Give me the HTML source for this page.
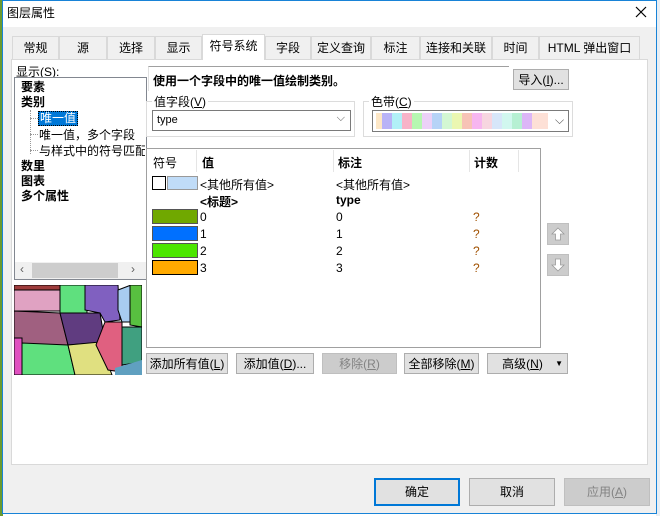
<!DOCTYPE html>
<html><head><meta charset="utf-8"><style>
*{box-sizing:border-box;margin:0;padding:0}
body{width:660px;height:516px;overflow:hidden;background:#fff;font-family:"Liberation Sans","Noto Sans CJK SC",sans-serif;font-size:12px;color:#000;position:relative}
.a{position:absolute}
.btn{position:absolute;background:#e1e1e1;border:1px solid #adadad;text-align:center;line-height:20px;font-size:12px}
.dis{background:#cccccc;border-color:#bfbfbf;color:#838383}
.tab{position:absolute;top:36px;height:23px;border:1px solid #d9d9d9;border-bottom:none;background:#f0f0f0;text-align:center;line-height:22px;font-size:12px}
.grp{position:absolute;border:1px solid #dcdcdc}
.sw{position:absolute;left:152px;width:46px;height:15px;border:1px solid #555}
b{font-weight:bold}
</style></head><body>
<div class="a" style="left:0;top:0;width:3px;height:516px;background:#6a9a30"></div>
<div class="a" style="left:656px;top:0;width:4px;height:516px;background:#e8eef4"></div>
<div class="a" style="left:2px;top:0;width:655px;height:514px;border:1px solid #1883d7;background:#f0f0f0"></div>
<div class="a" style="left:3px;top:1px;width:653px;height:26px;background:#fff"></div>
<div class="a" style="left:7px;top:4px;font-size:12px">图层属性</div>
<svg class="a" style="left:635px;top:6px" width="12" height="12"><path d="M1 1L11 11M11 1L1 11" stroke="#000" stroke-width="1.2"/></svg>

<div class="a" style="left:11px;top:59px;width:637px;height:406px;background:#fff;border:1px solid #d9d9d9"></div>
<div class="tab" style="left:12px;width:47px">常规</div>
<div class="tab" style="left:59px;width:48px">源</div>
<div class="tab" style="left:107px;width:48px">选择</div>
<div class="tab" style="left:155px;width:47px">显示</div>
<div class="tab" style="left:202px;top:34px;height:26px;width:63px;background:#fff;z-index:2">符号系统</div>
<div class="tab" style="left:265px;width:46px">字段</div>
<div class="tab" style="left:311px;width:60px">定义查询</div>
<div class="tab" style="left:371px;width:49px">标注</div>
<div class="tab" style="left:420px;width:72px">连接和关联</div>
<div class="tab" style="left:492px;width:47px">时间</div>
<div class="tab" style="left:539px;width:101px">HTML 弹出窗口</div>

<div class="a" style="left:16px;top:63px">显示(<u>S</u>):</div>
<div class="a" style="left:14px;top:77px;width:133px;height:203px;border:1px solid #828790;background:#fff"></div>
<div class="a" style="left:21px;top:80px;line-height:15px"><b>要素</b><br><b>类别</b></div>
<div class="a" style="left:30px;top:110px;width:1px;height:44px;border-left:1px dotted #999"></div>
<div class="a" style="left:30px;top:118px;width:8px;border-top:1px dotted #999"></div>
<div class="a" style="left:30px;top:134px;width:8px;border-top:1px dotted #999"></div>
<div class="a" style="left:30px;top:150px;width:8px;border-top:1px dotted #999"></div>
<div class="a" style="left:38px;top:111px;width:40px;height:15px;background:#0078d7;color:#fff;border:1px dotted #000;line-height:13px;padding-left:1px">唯一值</div>
<div class="a" style="left:39px;top:127px;line-height:16px;white-space:nowrap;width:106px;overflow:hidden">唯一值，多个字段<br>与样式中的符号匹配</div>
<div class="a" style="left:21px;top:159px;line-height:15px"><b>数里</b><br><b>图表</b><br><b>多个属性</b></div>
<div class="a" style="left:15px;top:262px;width:131px;height:17px;background:#f0f0f0"></div>
<div class="a" style="left:32px;top:263px;width:86px;height:15px;background:#cdcdcd"></div>
<div class="a" style="left:20px;top:262px;color:#606060">&lsaquo;</div>
<div class="a" style="left:131px;top:262px;color:#606060">&rsaquo;</div>

<svg class="a" style="left:14px;top:285px" width="128" height="90" viewBox="14 285 128 90">
<g stroke="#000" stroke-width="1">
<rect x="14" y="285" width="128" height="90" fill="#fff" stroke="none"/>
<polygon points="14,285 70,285 70,290 14,290" fill="#9e3c3c"/>
<polygon points="14,290 70,290 70,311 14,311" fill="#e0a2c2"/>
<polygon points="60,285 87,285 87,313 60,313" fill="#5fe07e"/>
<polygon points="85,285 118,285 120,320 105,322 100,313 85,310" fill="#8060c0"/>
<polygon points="118,290 131,285 132,322 122,322 118,310" fill="#a8ccf0"/>
<polygon points="130,285 142,285 142,327 130,325" fill="#58c040"/>
<polygon points="14,311 60,313 68,345 14,345" fill="#a06080"/>
<polygon points="60,313 100,313 105,342 68,345" fill="#603c80"/>
<polygon points="14,338 22,338 22,375 14,375" fill="#e050c0"/>
<polygon points="22,343 68,345 75,375 22,375" fill="#5fe07e"/>
<polygon points="68,345 100,342 112,375 75,375" fill="#e0e080"/>
<polygon points="105,322 122,322 122,372 108,370 96,345" fill="#e06080"/>
<polygon points="122,327 142,327 142,362 122,365" fill="#40a080"/>
<polygon points="115,368 142,360 142,375 115,375" fill="#60a0c0" stroke="none"/>
</g></svg>

<div class="a" style="left:148px;top:66px;width:361px;height:25px;border-top:1px solid #a0a0a0;border-left:1px solid #e0e0e0;padding:5px 4px;font-weight:bold">使用一个字段中的唯一值绘制类别。</div>
<div class="btn" style="left:513px;top:69px;width:56px;height:21px">导入(<u>I</u>)...</div>

<div class="grp" style="left:146px;top:101px;width:209px;height:36px"></div>
<div class="a" style="left:152px;top:93px;background:#fff;padding:0 2px">值字段(<u>V</u>)</div>
<div class="a" style="left:152px;top:110px;width:199px;height:21px;border:1px solid #7a7a7a;padding:3px 4px;font-size:11px">type<span style="position:absolute;right:5px;top:1px;color:#555">⌵</span></div>
<div class="grp" style="left:363px;top:101px;width:210px;height:36px"></div>
<div class="a" style="left:369px;top:93px;background:#fff;padding:0 2px">色带(<u>C</u>)</div>
<div class="a" style="left:372px;top:110px;width:197px;height:22px;border:1px solid #7a7a7a"></div>
<div class="a" style="left:376px;top:113px;height:16px;display:flex">
<i style="width:6px;background:#fde7c6"></i><i style="width:10px;background:#b9b3f7"></i><i style="width:10px;background:#b1f0f7"></i><i style="width:10px;background:#f7b3c8"></i><i style="width:10px;background:#b6f7b1"></i><i style="width:10px;background:#ecd1f7"></i><i style="width:10px;background:#b6d3f7"></i><i style="width:10px;background:#d3f7d3"></i><i style="width:10px;background:#ebf7b1"></i><i style="width:10px;background:#f7c3b6"></i><i style="width:10px;background:#f7b6f0"></i><i style="width:10px;background:#f7d6e0"></i><i style="width:10px;background:#d7e6f9"></i><i style="width:10px;background:#d1f7ef"></i><i style="width:10px;background:#b6f0d3"></i><i style="width:10px;background:#dcb6f7"></i><i style="width:16px;background:#fde0d6"></i></div>
<div class="a" style="left:555px;top:113px;color:#555">⌵</div>

<div class="a" style="left:146px;top:148px;width:395px;height:200px;border:1px solid #a0a0a0;background:#fff"></div>
<div class="a" style="left:196px;top:150px;width:1px;height:22px;background:#e5e5e5"></div>
<div class="a" style="left:333px;top:150px;width:1px;height:22px;background:#e5e5e5"></div>
<div class="a" style="left:469px;top:150px;width:1px;height:22px;background:#e5e5e5"></div>
<div class="a" style="left:518px;top:150px;width:1px;height:22px;background:#e5e5e5"></div>
<div class="a" style="left:153px;top:154px">符号</div>
<div class="a" style="left:202px;top:154px"><b>值</b></div>
<div class="a" style="left:338px;top:154px"><b>标注</b></div>
<div class="a" style="left:474px;top:154px"><b>计数</b></div>
<div class="a" style="left:152px;top:176px;width:14px;height:14px;border:1px solid #000;background:#fff"></div>
<div class="a" style="left:167px;top:176px;width:31px;height:14px;border:1px solid #999;background:#c0dcf8"></div>
<div class="a" style="left:200px;top:176px">&lt;其他所有值&gt;</div>
<div class="a" style="left:336px;top:176px">&lt;其他所有值&gt;</div>
<div class="a" style="left:200px;top:193px"><b>&lt;标题&gt;</b></div>
<div class="a" style="left:336px;top:193px"><b>type</b></div>
<div class="sw" style="top:209px;background:#70a800"></div>
<div class="sw" style="top:226px;background:#0070ff"></div>
<div class="sw" style="top:243px;background:#4ce600"></div>
<div class="sw" style="top:260px;background:#ffaa00;border-color:#000"></div>
<div class="a" style="left:200px;top:209px;line-height:17px">0<br>1<br>2<br>3</div>
<div class="a" style="left:336px;top:209px;line-height:17px">0<br>1<br>2<br>3</div>
<div class="a" style="left:473px;top:209px;line-height:17px;color:#a05000">?<br>?<br>?<br>?</div>

<div class="a" style="left:547px;top:223px;width:22px;height:22px;background:#cccccc;border:1px solid #bfbfbf"></div>
<svg class="a" style="left:550px;top:226px" width="16" height="16"><path d="M8 2L14 8H10.5V14H5.5V8H2Z" fill="#fff" stroke="#9a9a9a" stroke-width="0.8"/></svg>
<div class="a" style="left:547px;top:254px;width:22px;height:22px;background:#cccccc;border:1px solid #bfbfbf"></div>
<svg class="a" style="left:550px;top:257px" width="16" height="16"><path d="M8 14L14 8H10.5V2H5.5V8H2Z" fill="#fff" stroke="#9a9a9a" stroke-width="0.8"/></svg>

<div class="btn" style="left:146px;top:353px;width:82px;height:21px">添加所有值(<u>L</u>)</div>
<div class="btn" style="left:236px;top:353px;width:78px;height:21px">添加值(<u>D</u>)...</div>
<div class="btn dis" style="left:322px;top:353px;width:75px;height:21px">移除(<u>R</u>)</div>
<div class="btn" style="left:404px;top:353px;width:75px;height:21px">全部移除(<u>M</u>)</div>
<div class="btn" style="left:487px;top:353px;width:81px;height:21px;padding-right:10px">高级(<u>N</u>)<span style="position:absolute;right:4px;top:0;font-size:8px">▼</span></div>

<div class="btn" style="left:374px;top:478px;width:86px;height:28px;line-height:24px;border:2px solid #0078d7">确定</div>
<div class="btn" style="left:469px;top:478px;width:86px;height:28px;line-height:26px">取消</div>
<div class="btn dis" style="left:564px;top:478px;width:86px;height:28px;line-height:26px">应用(<u>A</u>)</div>
</body></html>
